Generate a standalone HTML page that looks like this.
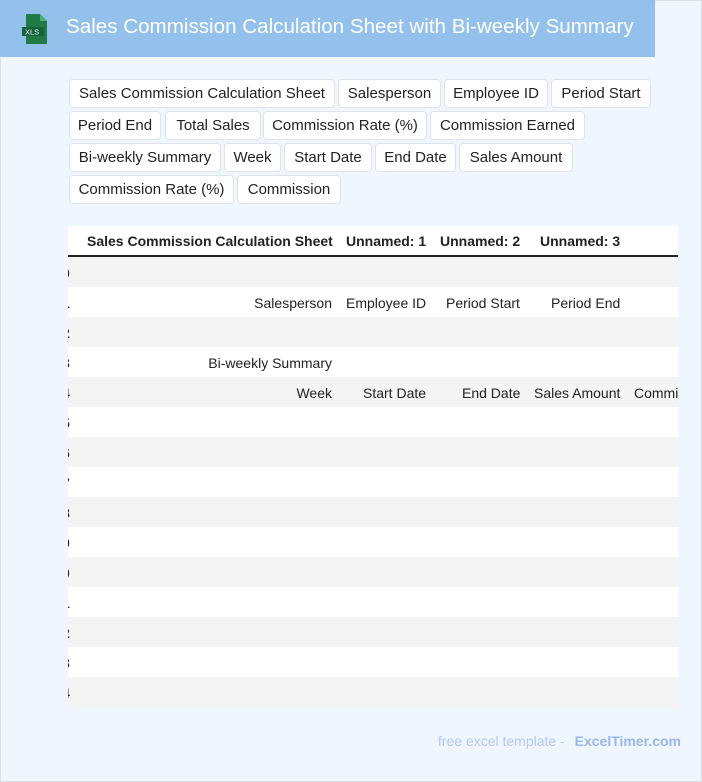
<!DOCTYPE html>
<html><head><style>
*{margin:0;padding:0;box-sizing:border-box}
body{width:702px;height:782px;background:#eff6fe;font-family:"Liberation Sans",sans-serif;position:relative;overflow:hidden;box-shadow:inset 0 0 0 1px #d6e1ea}
.hdr{position:absolute;left:0;top:0;width:655px;height:57px;background:#93c1ec}
.hdr h1{position:absolute;left:66px;top:15px;font-size:20.6px;font-weight:normal;color:#fff;white-space:nowrap}
.tag{position:absolute;background:#fff;border:1px solid #dde3e8;border-radius:4px;height:29px;line-height:27px;font-size:15px;color:#222;white-space:nowrap;text-align:center;overflow:hidden}
.tbl{position:absolute;left:68px;top:226px;width:610px;height:481px;overflow:hidden;background:#fff}
.row{position:absolute;left:0;width:610px;height:30px;font-size:14px;color:#222}
.row span{position:absolute;top:8px;white-space:nowrap}
.g{background:#f4f4f4}
.th{top:0;height:31px;border-bottom:2px solid #222;font-weight:bold}
.foot{position:absolute;right:21px;top:733px;font-size:14px;color:#b4c8f0}
.foot b{color:#9ab6ee;margin-left:6px}
</style></head><body>
<div class="hdr">
<svg style="position:absolute;left:21px;top:13px" width="30" height="32" viewBox="0 0 30 32"><path d="M5 1h14l7 7v23H5z" fill="#1f7a45"/><path d="M19 1v7h7z" fill="#4caf74"/><rect x="1" y="14" width="22" height="9" fill="#14633a"/><text x="4" y="21.5" font-size="7.5" fill="#fff" font-family="Liberation Sans">XLS</text></svg>
<h1>Sales Commission Calculation Sheet with Bi-weekly Summary</h1></div>
<div class="tag" style="left:69px;top:79px;width:266px">Sales Commission Calculation Sheet</div>
<div class="tag" style="left:338px;top:79px;width:103px">Salesperson</div>
<div class="tag" style="left:444px;top:79px;width:104px">Employee ID</div>
<div class="tag" style="left:551px;top:79px;width:100px">Period Start</div>
<div class="tag" style="left:69px;top:111px;width:92px">Period End</div>
<div class="tag" style="left:165px;top:111px;width:96px">Total Sales</div>
<div class="tag" style="left:263px;top:111px;width:164px">Commission Rate (%)</div>
<div class="tag" style="left:430px;top:111px;width:155px">Commission Earned</div>
<div class="tag" style="left:69px;top:143px;width:152px">Bi-weekly Summary</div>
<div class="tag" style="left:224px;top:143px;width:57px">Week</div>
<div class="tag" style="left:284px;top:143px;width:88px">Start Date</div>
<div class="tag" style="left:375px;top:143px;width:81px">End Date</div>
<div class="tag" style="left:459px;top:143px;width:114px">Sales Amount</div>
<div class="tag" style="left:69px;top:175px;width:165px">Commission Rate (%)</div>
<div class="tag" style="left:237px;top:175px;width:104px">Commission</div>
<div class="tbl">
<div class="row th"><span style="left:19px;top:7px">Sales Commission Calculation Sheet</span><span style="left:278px;top:7px">Unnamed: 1</span><span style="left:372px;top:7px">Unnamed: 2</span><span style="left:472px;top:7px">Unnamed: 3</span></div>
<div class="row g" style="top:31px"><span style="left:-6px;font-weight:bold">0</span></div>
<div class="row" style="top:61px"><span style="left:-6px;font-weight:bold">1</span><span style="right:346px">Salesperson</span><span style="left:278px">Employee ID</span><span style="left:378px">Period Start</span><span style="left:483px">Period End</span></div>
<div class="row g" style="top:91px"><span style="left:-6px;font-weight:bold">2</span></div>
<div class="row" style="top:121px"><span style="left:-6px;font-weight:bold">3</span><span style="right:346px">Bi-weekly Summary</span></div>
<div class="row g" style="top:151px"><span style="left:-6px;font-weight:bold">4</span><span style="right:346px">Week</span><span style="left:295px">Start Date</span><span style="left:394px">End Date</span><span style="left:466px">Sales Amount</span><span style="left:566px">Commission</span></div>
<div class="row" style="top:181px"><span style="left:-6px;font-weight:bold">5</span></div>
<div class="row g" style="top:211px"><span style="left:-6px;font-weight:bold">6</span></div>
<div class="row" style="top:241px"><span style="left:-6px;font-weight:bold">7</span></div>
<div class="row g" style="top:271px"><span style="left:-6px;font-weight:bold">8</span></div>
<div class="row" style="top:301px"><span style="left:-6px;font-weight:bold">9</span></div>
<div class="row g" style="top:331px"><span style="left:-6px;font-weight:bold">0</span></div>
<div class="row" style="top:361px"><span style="left:-6px;font-weight:bold">1</span></div>
<div class="row g" style="top:391px"><span style="left:-6px;font-weight:bold">2</span></div>
<div class="row" style="top:421px"><span style="left:-6px;font-weight:bold">3</span></div>
<div class="row g" style="top:451px"><span style="left:-6px;font-weight:bold">4</span></div>
</div>
<div class="foot">free excel template - <b>ExcelTimer.com</b></div>
</body></html>
